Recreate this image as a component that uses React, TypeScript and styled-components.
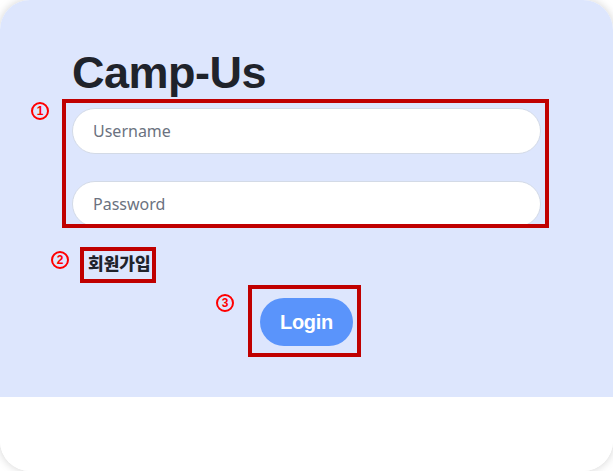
import styled, { createGlobalStyle } from 'styled-components';

const GlobalStyle = createGlobalStyle`
  html, body {
    margin: 0;
    padding: 0;
    background: #ffffff;
  }
  * {
    box-sizing: border-box;
  }
`;

// Layout
const Card = styled.div`
  width: 613px;
  height: 471px;
  border-radius: 30px;
  overflow: hidden;
  display: flex;
  flex-direction: column;
  background: #ffffff;
  box-shadow: 0 0 10px rgba(0, 0, 0, 0.18);
`;

const LoginPanel = styled.section`
  height: 397px;
  background: #dde6fd;
  padding: 49px 72px 0;
  display: flex;
  flex-direction: column;
`;

const Footer = styled.div`
  flex: 1;
  background: #ffffff;
`;

const Title = styled.h1`
  margin: 0 0 11px;
  font-family: 'Liberation Sans', Arial, sans-serif;
  font-weight: 700;
  font-size: 45px;
  line-height: 48px;
  color: #1f232b;
  letter-spacing: -0.5px;
`;

// Annotation overlay (red frame + circled number)
interface AnnotatedProps {
  $inset: string;
}

const Annotated = styled.div<AnnotatedProps>`
  position: relative;

  &::after {
    content: '';
    position: absolute;
    inset: ${props => props.$inset};
    border: 4px solid #c00000;
    pointer-events: none;
  }
`;

interface MarkerProps {
  $left: number;
  $top: number;
}

const Marker = styled.span<MarkerProps>`
  position: absolute;
  left: ${props => props.$left}px;
  top: ${props => props.$top}px;
  width: 18px;
  height: 18px;
  border: 2px solid #ff0000;
  border-radius: 50%;
  display: flex;
  align-items: center;
  justify-content: center;
  font-family: 'Liberation Sans', Arial, sans-serif;
  font-weight: 700;
  font-size: 12px;
  line-height: 1;
  color: #ff0000;
`;

const FieldGroup = styled(Annotated)`
  display: flex;
  flex-direction: column;
  gap: 27px;
`;

const Field = styled.input`
  width: 100%;
  height: 46px;
  border: 1px solid #d3dae6;
  border-radius: 23px;
  background: #ffffff;
  padding: 0 20px;
  font-family: 'Noto Sans', sans-serif;
  font-size: 16px;
  color: #1f232b;
  outline: none;

  &::placeholder {
    color: #6b7280;
  }
`;

const SignupRow = styled(Annotated)`
  align-self: flex-start;
  margin: 26px 0 0 16px;
`;

const SignupLink = styled.a`
  display: block;
  font-family: 'Noto Sans CJK KR', sans-serif;
  font-weight: 800;
  font-size: 17px;
  line-height: 20px;
  color: #1f232b;
  text-decoration: none;
  cursor: pointer;
`;

const ButtonRow = styled(Annotated)`
  align-self: center;
  margin-top: 25px;
`;

const LoginButton = styled.button`
  display: block;
  width: 93px;
  height: 48px;
  border: none;
  border-radius: 24px;
  background: #5a94fb;
  color: #ffffff;
  font-family: 'Liberation Sans', Arial, sans-serif;
  font-weight: 700;
  font-size: 20px;
  letter-spacing: -0.3px;
  cursor: pointer;
`;

const App = () => {
  return (
    <>
      <GlobalStyle />
      <Card>
        <LoginPanel>
          <Title>Camp-Us</Title>

          <FieldGroup $inset="-9px -8px -1px -10px">
            <Marker $left={-41} $top={-6}>1</Marker>
            <Field type="text" placeholder="Username" />
            <Field type="password" placeholder="Password" />
          </FieldGroup>

          <SignupRow $inset="-6px -5px -10px -8px">
            <Marker $left={-37} $top={-2}>2</Marker>
            <SignupLink>회원가입</SignupLink>
          </SignupRow>

          <ButtonRow $inset="-13px -8px -11px -12px">
            <Marker $left={-44} $top={-4}>3</Marker>
            <LoginButton>Login</LoginButton>
          </ButtonRow>
        </LoginPanel>
        <Footer />
      </Card>
    </>
  );
};

export default App;
